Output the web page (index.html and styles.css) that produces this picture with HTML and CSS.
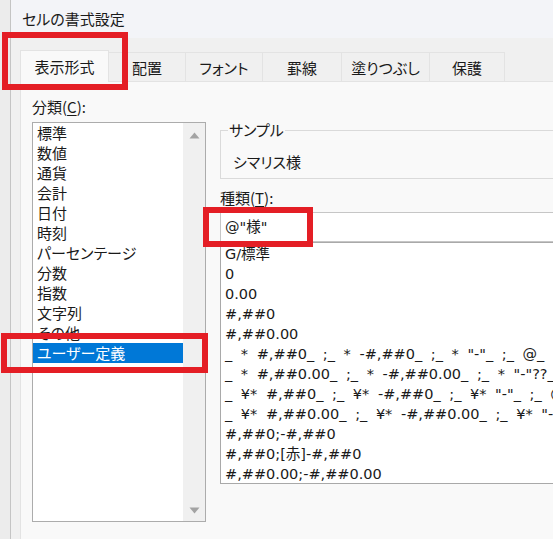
FILE: index.html
```html
<!DOCTYPE html>
<html lang="ja">
<head>
<meta charset="utf-8">
<title>セルの書式設定</title>
<link rel="stylesheet" href="styles.css">
</head>
<body>
<div class="window">
  <div class="titlebar">セルの書式設定</div>
  <div class="tabs">
    <div class="tab active tab-w88">表示形式</div>
    <div class="tab tab-w78">配置</div>
    <div class="tab tab-w77">フォント</div>
    <div class="tab tab-w79">罫線</div>
    <div class="tab tab-w88">塗りつぶし</div>
    <div class="tab tab-w75">保護</div>
  </div>
  <div class="panel">
    <div class="leftcol">
      <div class="label">分類(<u>C</u>):</div>
      <div class="listbox">
        <div class="items">
          <div class="item">標準</div>
          <div class="item">数値</div>
          <div class="item">通貨</div>
          <div class="item">会計</div>
          <div class="item">日付</div>
          <div class="item">時刻</div>
          <div class="item">パーセンテージ</div>
          <div class="item">分数</div>
          <div class="item">指数</div>
          <div class="item">文字列</div>
          <div class="item">その他</div>
          <div class="item selected">ユーザー定義</div>
        </div>
        <div class="scrollbar">
          <svg class="arrow" width="11" height="7" viewBox="0 0 11 7"><path d="M5.5 0.5 L10.5 6.5 L0.5 6.5 Z" fill="#a3a3a3"/></svg>
          <svg class="arrow" width="11" height="7" viewBox="0 0 11 7"><path d="M0.5 0.5 L10.5 0.5 L5.5 6.5 Z" fill="#a3a3a3"/></svg>
        </div>
      </div>
    </div>
    <div class="rightcol">
      <fieldset class="sample">
        <legend>サンプル</legend>
        <div class="sample-value">シマリス様</div>
      </fieldset>
      <div class="label label-type">種類(<u>T</u>):</div>
      <div class="input">@"様"</div>
      <div class="formats">
        <div class="fmt">G/標準</div>
        <div class="fmt">0</div>
        <div class="fmt">0.00</div>
        <div class="fmt">#,##0</div>
        <div class="fmt">#,##0.00</div>
        <div class="fmt">_ * #,##0_ ;_ * -#,##0_ ;_ * "-"_ ;_ @_ </div>
        <div class="fmt">_ * #,##0.00_ ;_ * -#,##0.00_ ;_ * "-"??_ ;_ @_ </div>
        <div class="fmt">_ ¥* #,##0_ ;_ ¥* -#,##0_ ;_ ¥* "-"_ ;_ @_ </div>
        <div class="fmt">_ ¥* #,##0.00_ ;_ ¥* -#,##0.00_ ;_ ¥* "-"??_ ;_ @_ </div>
        <div class="fmt">#,##0;-#,##0</div>
        <div class="fmt">#,##0;[赤]-#,##0</div>
        <div class="fmt">#,##0.00;-#,##0.00</div>
      </div>
    </div>
  </div>
</div>
<div class="mark mark-tab"></div>
<div class="mark mark-category"></div>
<div class="mark mark-input"></div>
</body>
</html>
```
FILE: styles.css
```css
html, body {
  margin: 0;
  padding: 0;
  overflow: hidden;
}
body {
  width: 553px;
  height: 539px;
  position: relative;
  background: #ececec;
  font-family: "Noto Sans CJK JP", sans-serif;
  font-size: 15px;
  color: #1a1a1a;
  font-feature-settings: "palt";
}
.window {
  margin-left: 10px;
  width: 700px;
  height: 539px;
  border-left: 1px solid #c4c4c4;
  background: #f0f0f0;
  display: flex;
  flex-direction: column;
}
.titlebar {
  height: 38px;
  box-sizing: border-box;
  padding: 0 0 2px 11px;
  background: #f3f4f8;
  display: flex;
  align-items: center;
  line-height: 1;
}
.tabs {
  height: 43px;
  box-sizing: border-box;
  display: flex;
  align-items: flex-end;
  padding-left: 9px;
  background: #f0f0f0;
}
.tab {
  height: 29px;
  box-sizing: border-box;
  border: 1px solid #e3e3e3;
  border-bottom: none;
  margin-right: -1px;
  display: flex;
  align-items: center;
  justify-content: center;
  background: #f0f0f0;
  line-height: 1;
  padding-top: 1px;
  flex-shrink: 0;
}
.tab-w75 { width: 76px; }
.tab-w77 { width: 78px; }
.tab-w78 { width: 78px; }
.tab-w79 { width: 80px; }
.tab-w88 { width: 89px; }
.tab.active {
  height: 32px;
  margin-bottom: -1px;
  background: #f9f9f9;
  position: relative;
  z-index: 1;
  padding-top: 0;
}
.panel {
  flex: 1;
  margin-left: 9px;
  border-top: 1px solid #e3e3e3;
  border-left: 1px solid #e3e3e3;
  background: #f9f9f9;
  display: flex;
  gap: 14px;
  padding-left: 11px;
}
.leftcol {
  width: 174px;
  display: flex;
  flex-direction: column;
}
.label {
  line-height: 20px;
  height: 20px;
  margin-top: 15px;
}
.label u {
  text-decoration-thickness: 1px;
  text-underline-offset: 2px;
}
.listbox {
  margin-top: 5px;
  height: 400px;
  box-sizing: border-box;
  border: 1px solid #acacac;
  background: #ffffff;
  display: flex;
}
.items {
  flex: 1;
}
.item {
  height: 20px;
  line-height: 20px;
  padding-left: 4px;
  white-space: nowrap;
}
.item.selected {
  background: #0078d7;
  color: #ffffff;
}
.scrollbar {
  width: 22px;
  background: #f0f0f0;
  display: flex;
  flex-direction: column;
  align-items: center;
  justify-content: space-between;
  padding: 9px 0 7px;
}
.arrow {
  display: block;
}
.rightcol {
  width: 360px;
  display: flex;
  flex-direction: column;
}
.sample {
  margin: 38px 0 0;
  padding: 0 0 6px 7px;
  border: 1px solid #dadada;
  min-width: 0;
}
.sample legend {
  padding: 0 1px;
  line-height: 20px;
}
.sample-value {
  margin-top: 12px;
  line-height: 20px;
  padding-left: 5px;
}
.label-type {
  margin-top: 9px;
}
.input {
  margin-top: 4px;
  height: 30px;
  box-sizing: border-box;
  border: 1px solid #c6c6c6;
  background: #ffffff;
  padding-left: 4px;
  line-height: 28px;
  font-family: "DejaVu Sans", "Noto Sans CJK JP", sans-serif;
  font-size: 14.5px;
}
.formats {
  height: 242px;
  box-sizing: border-box;
  border: 1px solid #a9a9a9;
  background: #ffffff;
  padding: 1px 0 0 4px;
  overflow: hidden;
  font-family: "DejaVu Sans", "Noto Sans CJK JP", sans-serif;
  font-size: 14.5px;
}
.fmt {
  height: 20px;
  line-height: 20px;
  white-space: pre;
  word-spacing: 4px;
}
.mark {
  position: absolute;
  box-sizing: border-box;
  border: 6px solid #e41e25;
}
.mark-tab {
  left: 2px;
  top: 32px;
  width: 126px;
  height: 58px;
}
.mark-category {
  left: 1px;
  top: 333px;
  width: 207px;
  height: 40px;
}
.mark-input {
  left: 203px;
  top: 207px;
  width: 110px;
  height: 40px;
}
```
